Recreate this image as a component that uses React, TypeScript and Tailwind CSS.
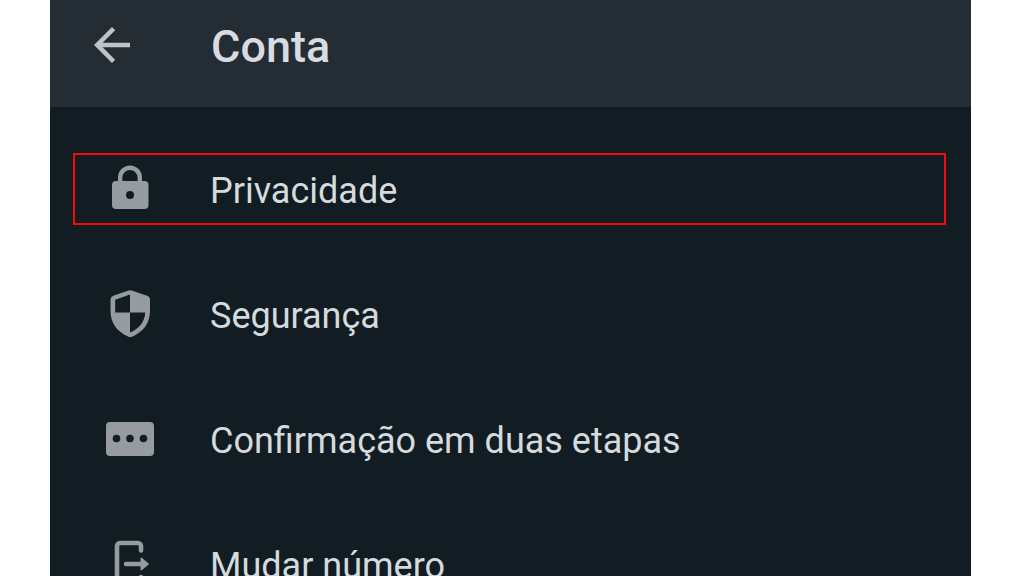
import { MdArrowBack } from "react-icons/md";

interface MenuItem {
    label: string;
    icon: React.ReactElement;
    highlighted?: boolean;
}

const LockIcon = () => (
    <svg viewBox="0 0 48 48" className="size-12 overflow-visible" aria-hidden="true">
        <path d="M14.200 18v-5.500a9.800 9.800 0 0 1 19.600 0V18" fill="none" stroke="currentColor" strokeWidth="4.400" />
        <rect x="6" y="16" width="36.500" height="28" rx="4" fill="currentColor" />
        <circle cx="24" cy="30" r="4" fill="#111c23" />
    </svg>
);

const ShieldIcon = () => (
    <svg viewBox="0 0 48 48" className="size-12 overflow-visible" aria-hidden="true">
        <path
            d="M22.600 .5a4 4 0 0 1 3 0l15.600 5.300A4 4 0 0 1 44 9.500V21c0 12-6.500 20.500-17.500 25.500a5 5 0 0 1-4.500 0C11 41.500 4.500 33 4.500 21V9.500a4 4 0 0 1 2.700-3.700z"
            fill="currentColor"
        />
        <path d="M24 4.500v18H9.200V10.500a1 1 0 0 1 .7-1zM24 22.500h15.200c-.6 9.500-5.700 16-15.200 20z" fill="#111c23" />
    </svg>
);

const PinIcon = () => (
    <svg viewBox="0 0 48 48" className="size-12" aria-hidden="true">
        <rect y="7" width="48" height="34" rx="4" fill="currentColor" />
        <g fill="#111c23">
            <circle cx="10.500" cy="23.500" r="3.800" />
            <circle cx="24" cy="23.500" r="3.800" />
            <circle cx="37.500" cy="23.500" r="3.800" />
        </g>
    </svg>
);

const ChangeNumberIcon = () => (
    <svg viewBox="0 0 48 48" className="size-12" aria-hidden="true">
        <path
            d="M35 10.500V6a3 3 0 0 0-3-3H14a3 3 0 0 0-3 3v36a3 3 0 0 0 3 3h18a3 3 0 0 0 3-3v-5M20 24h16"
            fill="none"
            stroke="currentColor"
            strokeWidth="4.600"
            strokeLinecap="round"
        />
        <path d="M34.500 18.500c0-.9 1-1.200 1.600-.6l6.300 5.400a1 1 0 0 1 0 1.400l-6.300 5.400c-.6.6-1.600.3-1.600-.6z" fill="currentColor" />
    </svg>
);

const items: MenuItem[] = [
    { label: "Privacidade", icon: <LockIcon />, highlighted: true },
    { label: "Segurança", icon: <ShieldIcon /> },
    { label: "Confirmação em duas etapas", icon: <PinIcon /> },
    { label: "Mudar número", icon: <ChangeNumberIcon /> },
];

const MenuRow: React.FC<MenuItem> = props => {
    const { label, icon, highlighted } = props;

    return (
        <li>
            <button
                type="button"
                className={`flex h-18 w-full items-center gap-14 border-2 pl-[31px] text-left ${highlighted ? "border-[#f40a0c]" : "border-transparent"}`}
            >
                <span className="shrink-0 text-[#959b9f]">{icon}</span>
                <span className="pt-1 text-4xl whitespace-nowrap text-[#d5dadd]">{label}</span>
            </button>
        </li>
    );
};

export default function App() {
    return (
        <div className="h-screen overflow-hidden bg-white pr-[53px] pl-[50px] font-['Roboto',sans-serif]">
            <div className="min-h-full bg-[#111c23]">
                <header className="flex items-center gap-18 bg-[#242d34] pt-[18px] pb-[35px] pl-[35px]">
                    <button type="button" aria-label="Voltar" className="text-[#c0c4c8]">
                        <MdArrowBack size={54} />
                    </button>
                    <h1 className="pt-1 text-[45px] leading-[50px] font-medium text-[#d8dce0]">Conta</h1>
                </header>

                <ul className="flex flex-col gap-[53px] pt-[46px] pr-[25px] pl-[23px]">
                    {items.map(item => (
                        <MenuRow key={item.label} {...item} />
                    ))}
                </ul>
            </div>
        </div>
    );
}
